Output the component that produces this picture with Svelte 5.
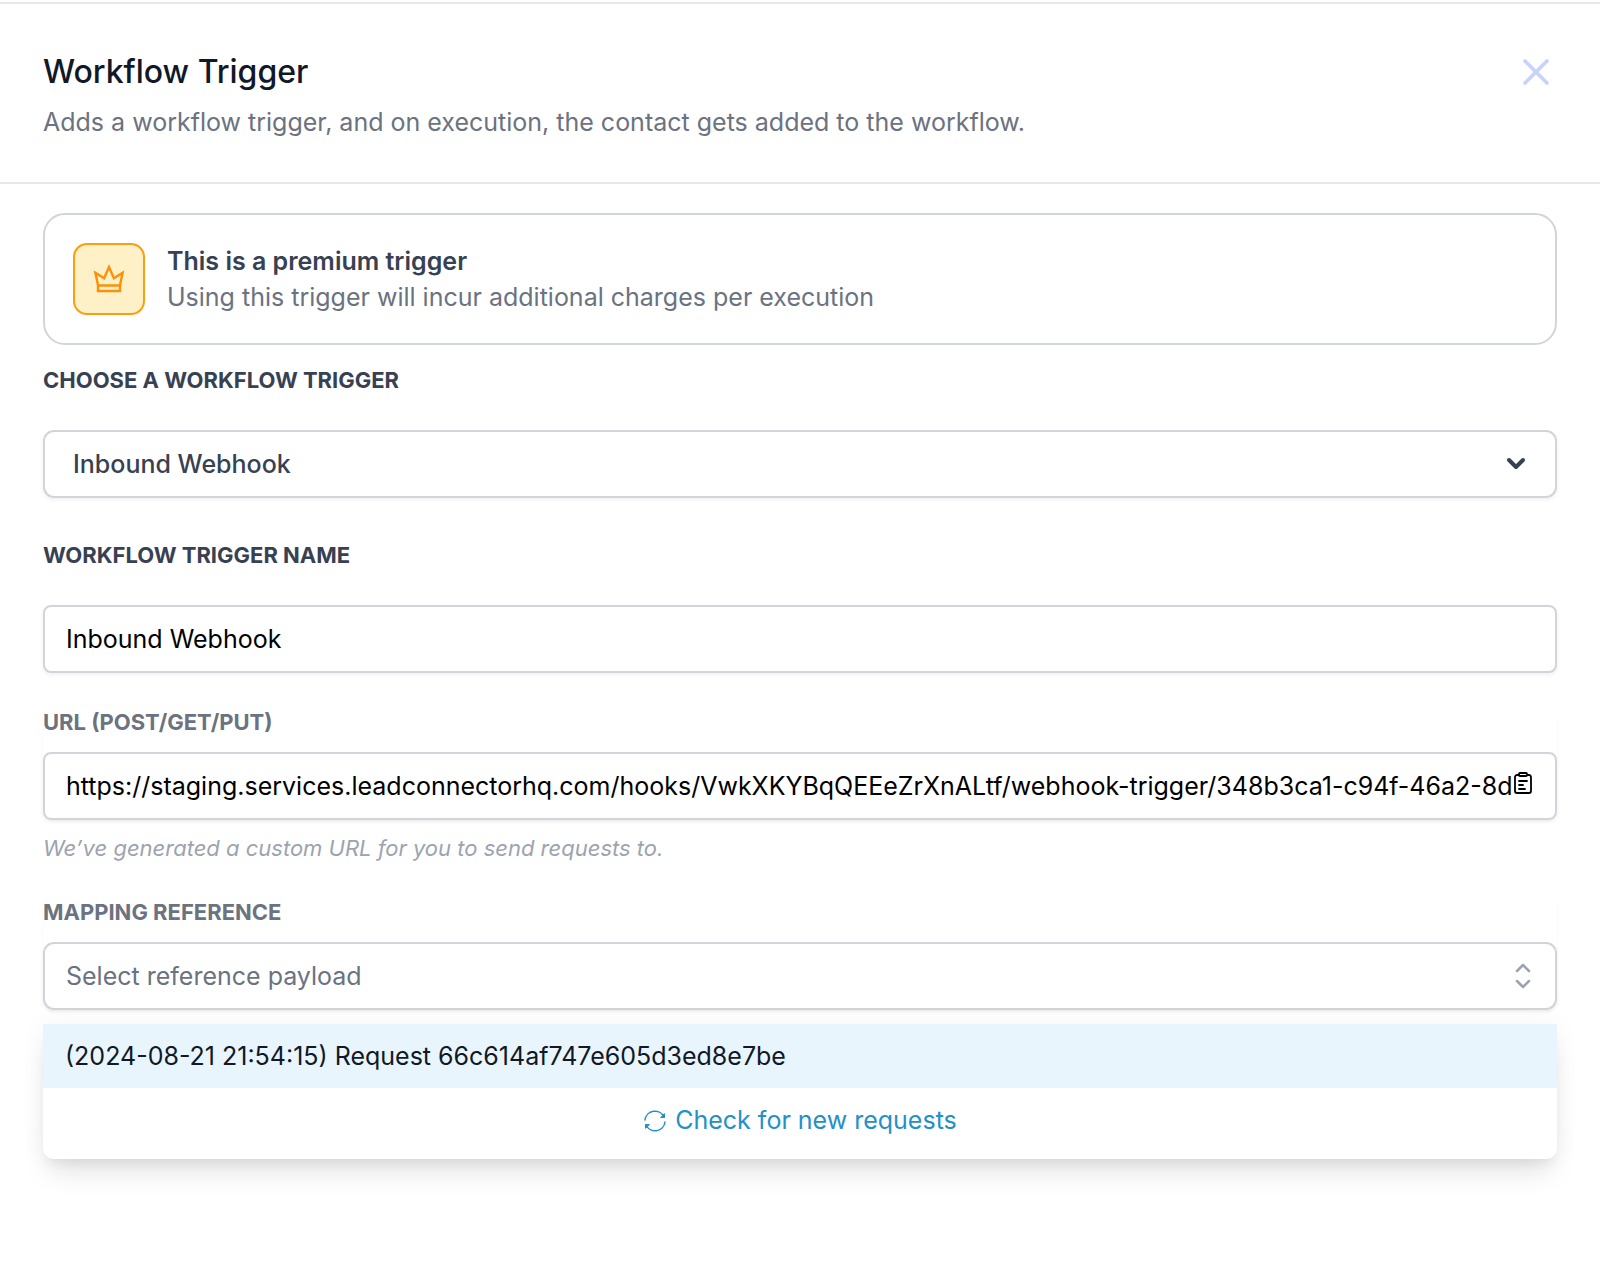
<script>
  const triggers = ['Inbound Webhook', 'Contact Created', 'Form Submitted'];
  const requests = [
    { id: '66c614af747e605d3ed8e7be', date: '2024-08-21 21:54:15' }
  ];

  let trigger = 'Inbound Webhook';
  let triggerName = 'Inbound Webhook';
  let url = 'https://staging.services.leadconnectorhq.com/hooks/VwkXKYBqQEEeZrXnALtf/webhook-trigger/348b3ca1-c94f-46a2-8da1-0b7c';
  let payload = '';
  let showPanel = true;
  let showRequests = true;

  const copyUrl = () => {
    navigator.clipboard.writeText(url);
  };

  // Pick a request from the list and close it
  const selectRequest = (request) => {
    payload = request.id;
    showRequests = false;
  };

  const checkRequests = () => {
    showRequests = true;
  };
</script>

{#if showPanel}
  <section class="panel">
    <header>
      <div class="heading">
        <h1>Workflow Trigger</h1>
        <p>Adds a workflow trigger, and on execution, the contact gets added to the workflow.</p>
      </div>
      <button class="close-button" aria-label="Close" on:click={() => showPanel = false}>
        <svg viewBox="0 0 48 48" width="48" height="48" fill="none" stroke="currentColor" stroke-width="3.6" stroke-linecap="round">
          <path d="M13 13l22 22M35 13L13 35" />
        </svg>
      </button>
    </header>

    <main>
      <div class="premium">
        <div class="premium-icon">
          <svg viewBox="0 0 36 36" width="36" height="36" fill="none" stroke="currentColor" stroke-width="2.4">
            <path d="M7.2 25L4.4 11.800l8.700 5.500L18 6l4.900 11.300 8.700-5.500L28.800 25" />
            <path d="M7 24.500h22V30H7z" />
          </svg>
        </div>
        <div class="premium-text">
          <strong>This is a premium trigger</strong>
          <span>Using this trigger will incur additional charges per execution</span>
        </div>
      </div>

      <div class="field">
        <label for="trigger">Choose a workflow trigger</label>
        <div class="control">
          <select id="trigger" class="trigger-select" bind:value={trigger}>
            {#each triggers as item}
              <option value={item}>{item}</option>
            {/each}
          </select>
          <svg class="chevron" viewBox="0 0 24 24" width="24" height="24" fill="none" stroke="currentColor" stroke-width="4" stroke-linecap="round" stroke-linejoin="round">
            <path d="M5 8l7 7 7-7" />
          </svg>
        </div>
      </div>

      <div class="field">
        <label for="name">Workflow trigger name</label>
        <input id="name" type="text" bind:value={triggerName} />
      </div>

      <div class="reference">
        <div class="group">
          <label for="url">URL (POST/GET/PUT)</label>
          <div class="control">
            <input id="url" class="url-input" type="text" readonly value={url} />
            <button class="copy-button" aria-label="Copy URL" on:click={copyUrl}>
              <svg viewBox="0 0 20 24" width="20" height="24" fill="none" stroke="currentColor" stroke-width="1.8" stroke-linecap="round" stroke-linejoin="round">
                <path d="M6 4H4a2 2 0 0 0-2 2v14a2 2 0 0 0 2 2h12a2 2 0 0 0 2-2V6a2 2 0 0 0-2-2h-2" />
                <rect x="6" y="2" width="8" height="3" rx="1" />
                <path d="M6 10h8M6 14h4M6 18h6" />
              </svg>
            </button>
          </div>
        </div>
        <p class="hint">We’ve generated a custom URL for you to send requests to.</p>
      </div>

      <div class="reference">
        <div class="group">
          <label for="payload">Mapping reference</label>
          <div class="control">
            <select id="payload" class="payload-select" bind:value={payload}>
              <option value="">Select reference payload</option>
              {#each requests as request}
                <option value={request.id}>({request.date}) Request {request.id}</option>
              {/each}
            </select>
            <svg class="selector" viewBox="0 0 20 28" width="20" height="28" fill="none" stroke="currentColor" stroke-width="2.5" stroke-linecap="round" stroke-linejoin="round">
              <path d="M4 9l6-6 6 6M4 19l6 6 6-6" />
            </svg>

            {#if showRequests}
              <div class="requests">
                {#each requests as request}
                  <button class="request" on:click={() => selectRequest(request)}>
                    ({request.date}) Request {request.id}
                  </button>
                {/each}
                <button class="check-button" on:click={checkRequests}>
                  <svg viewBox="0 0 24 24" width="24" height="24" fill="none" stroke="currentColor" stroke-width="1.5" stroke-linecap="round" stroke-linejoin="round">
                    <path d="M2 12A10 10 0 0 1 21 9M22 14A10 10 0 0 1 3 17" />
                    <path d="M21.5 6v3.500H18zM2.500 20v-3.500H6z" fill="currentColor" stroke-width="1" />
                  </svg>
                  Check for new requests
                </button>
              </div>
            {/if}
          </div>
        </div>
      </div>
    </main>
  </section>
{/if}

<style>
  :global(body) {
    margin: 0;
    background-color: #fff;
    font-family: Inter, "Liberation Sans", sans-serif;
  }

  .panel {
    box-sizing: border-box;
    min-height: 100vh;
    padding-top: 2px;
    font-size: 25px;
    line-height: 36px;
    color: #6b7280;
  }

  header {
    display: flex;
    justify-content: space-between;
    align-items: flex-start;
    padding: 44px 40px 42px 43px;
    border-top: 2px solid #e5e7eb;
    border-bottom: 2px solid #e5e7eb;
  }

  h1 {
    margin: 0 0 8px;
    font-size: 32px;
    font-weight: 500;
    line-height: 48px;
    color: #111827;
  }

  p {
    margin: 0;
  }

  button {
    padding: 0;
    border: none;
    background: none;
    font: inherit;
    cursor: pointer;
  }

  svg {
    display: block;
    flex: none;
  }

  .close-button {
    color: #c7d2fe;
  }

  main {
    padding: 29px 43px 160px;
  }

  /* Premium notice */
  .premium {
    display: flex;
    align-items: center;
    gap: 22px;
    margin-bottom: 19px;
    padding: 28px;
    border: 2px solid #d1d5db;
    border-radius: 22px;
  }

  .premium-icon {
    display: flex;
    align-items: center;
    justify-content: center;
    box-sizing: border-box;
    width: 72px;
    height: 72px;
    border: 2px solid #f99f10;
    border-radius: 14px;
    background-color: #fef0c7;
    color: #fb9009;
  }

  .premium-text {
    display: flex;
    flex-direction: column;
  }

  .premium-text strong {
    font-weight: 600;
    color: #374151;
  }

  /* Form fields */
  label {
    display: block;
    font-size: 22px;
    font-weight: 700;
    line-height: 32px;
    text-transform: uppercase;
  }

  .field {
    display: flex;
    flex-direction: column;
    gap: 34px;
    margin-bottom: 41px;
  }

  .field label {
    color: #374151;
  }

  .field + .reference {
    margin-top: -8px;
  }

  .reference {
    margin-bottom: 32px;
  }

  .group {
    display: flex;
    flex-direction: column;
    gap: 14px;
    border-radius: 11px;
    box-shadow: 0 1px 3px rgba(0, 0, 0, 0.04);
  }

  .control {
    position: relative;
  }

  input, select {
    display: block;
    box-sizing: border-box;
    width: 100%;
    height: 68px;
    padding: 0 21px;
    border: 2px solid #d1d5db;
    border-radius: 8px;
    background-color: #fff;
    box-shadow: 0 2px 4px rgba(0, 0, 0, 0.06);
    font: inherit;
    color: #000;
    appearance: none;
  }

  select {
    border-radius: 11px;
  }

  .trigger-select {
    padding: 0 28px;
    font-weight: 500;
    color: #374151;
  }

  .payload-select {
    color: #6b7280;
  }

  .url-input {
    padding-right: 44px;
  }

  .chevron {
    position: absolute;
    top: 22px;
    right: 29px;
    color: #374151;
    pointer-events: none;
  }

  .copy-button {
    position: absolute;
    top: 19px;
    right: 24px;
    color: #000;
  }

  .selector {
    position: absolute;
    top: 20px;
    right: 24px;
    color: #9ca3af;
    pointer-events: none;
  }

  .hint {
    margin-top: 12px;
    font-size: 22px;
    font-style: italic;
    line-height: 32px;
    color: #9ca3af;
  }

  /* Request list */
  .requests {
    position: absolute;
    top: 82px;
    left: 0;
    right: 0;
    border-radius: 0 0 11px 11px;
    background-color: #fff;
    box-shadow: 0 19px 28px -6px rgba(0, 0, 0, 0.1), 0 8px 12px -4px rgba(0, 0, 0, 0.06), 0 0 28px rgba(0, 0, 0, 0.04);
  }

  .request {
    display: block;
    width: 100%;
    padding: 14px 22px;
    background-color: #e9f5fc;
    text-align: left;
    color: #111827;
  }

  .check-button {
    display: flex;
    align-items: center;
    justify-content: center;
    gap: 8px;
    width: 100%;
    padding: 14px 0 21px;
    color: #2490c8;
  }
</style>
